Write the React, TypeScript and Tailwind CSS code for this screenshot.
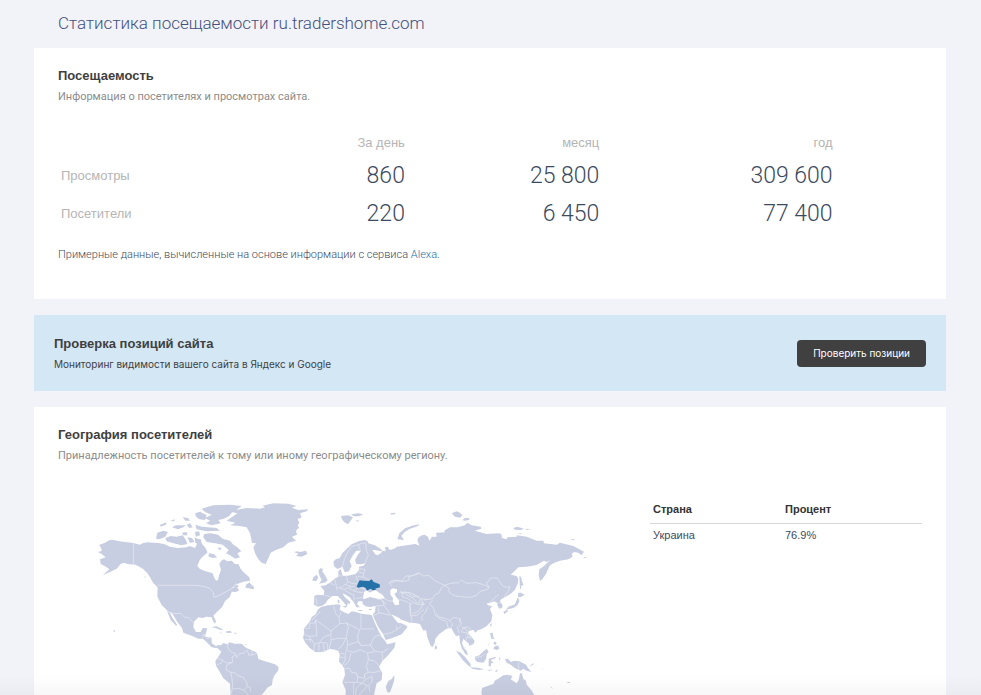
import React from "react";

const LAND = "#c8cee1";
const BORDER = "#e9ecf5";

type Region = { at: string; land: string; seas?: string; borders: string };

// The map is split into regions, each with its own local origin.
const regions: Region[] = [
  {
    // North America
    at: "translate(0 0)",
    land:
      "M24,186 L36,182 30,168 27,165 45,158 58,151 68,149 88,154 130,159 150,164 158,160 172,157 190,158 205,159 222,162 240,170 262,174 290,172 300,168 315,174 322,160 326,146 332,148 336,162 345,172 350,180 352,188 336,202 328,212 322,228 330,237 345,243 368,250 372,262 378,272 384,270 387,256 393,240 388,222 394,212 402,208 412,214 425,212 435,222 445,222 452,236 460,246 478,262 480,272 460,275 442,282 425,295 440,292 448,300 438,306 425,305 420,320 405,333 397,350 380,367 370,377 378,393 375,401 369,393 365,382 350,380 338,384 325,382 312,395 310,412 318,426 332,426 338,414 352,415 348,428 345,440 365,443 365,460 378,468 392,465 390,471 378,474 365,472 352,458 340,447 325,446 305,437 280,428 276,414 262,396 248,372 236,366 215,345 202,320 203,290 190,280 180,262 172,250 160,238 148,230 135,224 112,222 102,218 92,222 80,236 60,246 38,256 58,238 48,230 32,222 30,208 47,202 38,194Z M231,363 L240,370 250,388 262,405 258,407 242,390Z M188,276 L208,290 204,294Z M163,256 l5,8 -3,0Z M480,280 L492,292 490,298 472,292Z M70,421 h5 v4 h-4Z",
    borders:
      "M130,158 V222 L145,229 160,238 172,250 M203,286 H320 L345,290 360,296 370,308 372,322 388,316 410,304 425,296 440,280 M236,366 L255,371 272,370 284,382 296,383 310,398 M335,447 L340,436 346,433",
  },
  {
    // Arctic islands and Greenland
    at: "translate(180 0)",
    land:
      "M230,92 L262,70 244,66 258,60 290,54 330,56 345,52 337,47 370,40 415,41 440,48 425,53 445,60 475,58 470,64 450,70 455,82 443,88 448,98 443,108 448,112 438,122 441,134 426,140 438,152 415,158 400,172 378,180 362,188 355,205 347,222 335,218 325,208 315,190 310,172 318,160 305,158 304,148 300,130 290,112 268,108 240,106 256,98Z M155,56 L190,46 240,44 275,48 262,58 245,68 238,78 222,86 205,90 212,100 185,106 168,100 180,92 165,84 185,74 165,66Z M135,70 L150,65 170,76 165,90 148,88 138,80Z M30,104 L50,97 48,104 32,110Z M60,92 L76,88 72,94Z M98,82 L114,84 120,92 106,92Z M66,112 L78,106 108,106 100,112 84,118Z M110,104 L120,100 128,112 118,114Z M22,128 L40,122 54,126 46,140 28,148 18,146Z M46,144 L62,138 80,140 98,136 108,150 112,162 95,166 70,160 50,154Z M96,128 L110,126 112,136 100,136Z M112,142 L126,144 134,156 120,158Z M134,126 L148,124 150,136 138,140Z M136,104 L155,110 200,114 210,122 170,124 140,118Z M162,132 L182,130 204,134 218,146 240,152 250,164 262,172 274,184 262,190 270,202 256,206 240,196 228,190 236,180 218,164 196,160 170,156 160,142Z M176,190 L190,192 202,202 190,204 176,200Z M206,172 l8,2 -2,6 -8,-2Z M134,142 L152,150 146,164 136,158Z M432,186 L442,184 450,186 468,182 472,192 455,200 438,198 445,191Z M250,290 L262,284 266,290 254,296Z M288,284 L300,276 300,284 312,292 310,297 286,293Z",
    borders: "",
  },
  {
    // South America and the Caribbean
    at: "translate(240 285)",
    land:
      "M124,172 L136,184 148,180 152,182 160,174 172,178 178,172 195,176 215,176 228,188 245,196 258,202 262,208 265,222 290,230 315,238 326,246 324,258 314,270 308,284 306,300 292,308 282,322 272,332 182,332 180,296 160,280 150,262 138,242 136,228 145,215 154,200Z M124,126 L140,124 160,134 152,135 136,129Z M168,139 L182,138 186,143 170,144Z M148,143 h8 v2 h-8Z M193,143 h6 v3 h-6Z M226,176 h3 v4 h-3Z",
    borders:
      "M175,174 L172,186 182,200 196,206 200,218 208,206 222,204 230,196 M232,196 L236,210 248,210 258,206 M246,197 V210 M196,210 L186,216 188,230 M144,220 L158,226 170,234 188,232 M140,240 L154,234 158,226 M188,232 L170,240 168,254 182,262 192,262 204,272 218,276 230,292 232,304 242,308 242,320 M182,262 L186,280 188,304 184,326 M188,312 L206,310 222,316 232,304 M222,316 L236,330 M98,148 L106,152 M108,160 L120,160",
  },
  {
    // Europe, Near East and western Russia
    at: "translate(615 30)",
    land:
      "M118,200 L115,185 122,178 134,174 142,160 154,148 170,133 190,124 208,120 218,124 220,130 240,136 262,150 258,154 240,150 232,150 240,162 246,166 258,160 262,152 272,154 270,142 278,140 284,150 305,144 315,140 345,138 360,132 375,140 368,122 378,108 390,105 400,112 400,388 390,385 375,370 345,368 325,361 305,350 288,343 300,358 308,368 320,370 328,374 338,380 320,403 290,415 272,420 264,402 250,382 236,352 234,342 240,335 242,318 225,321 212,319 203,312 202,304 190,304 186,312 195,322 184,322 176,306 164,292 152,284 142,280 150,292 166,306 164,312 158,310 156,322 150,312 140,300 128,288 112,288 98,300 92,310 82,317 68,320 57,314 58,288 66,284 86,286 88,272 76,258 92,256 108,246 118,236 130,230 130,212 138,208 142,226 154,226 158,216 150,218 142,200 128,207Z M75,205 L84,206 82,214 90,226 98,240 92,247 72,251 80,240 74,228 70,214Z M55,232 L65,224 70,232 64,243 52,242Z M138,48 L160,46 174,52 160,72 152,70 142,60Z M168,43 L190,40 205,43 192,49 176,49Z M180,62 l10,-1 2,4Z M286,40 L302,38 300,42 288,44Z M128,299 h5 v10 h-5Z M132,288 h3 v6 h-3Z M142,318 L154,318 152,324Z M190,330 h12 v3 h-12Z M222,327 h8 v3 h-8Z",
    seas:
      "M198,152 L188,165 180,180 184,192 198,193 212,190 205,197 192,200 192,210 182,222 158,227 143,227 150,217 162,214 165,206 170,198 164,184 172,168 184,152Z M204,296 L207,276 216,270 224,278 240,270 262,284 270,295 250,297 225,291 208,297Z M286,270 L294,265 306,268 306,276 298,282 304,292 312,300 312,314 300,316 293,304 294,294 286,284Z",
    borders:
      "M142,200 L148,178 156,160 170,140 190,134 M190,134 L196,150 M190,134 L200,130 212,128 214,150 220,166 210,188 M130,226 L140,228 M154,228 L158,245 170,250 186,252 M118,236 L122,248 124,260 M104,248 L118,256 M124,262 L140,262 150,254 158,246 M124,264 L128,272 M134,266 L148,268 162,262 180,258 M150,254 L168,258 M162,266 L176,272 190,262 M148,270 L164,280 176,284 M176,272 L186,276 204,278 M190,262 L208,266 212,274 M176,284 L178,300 M184,296 L202,292 M184,228 L188,244 M192,216 L206,220 206,232 222,240 M190,206 L210,208 208,218 M188,228 L204,232 M88,286 L106,290 M64,294 L66,316 M244,296 L262,300 268,316 M268,296 L280,302 292,304 M262,302 L274,312 M242,318 L266,316 278,330 284,342 M282,246 L290,260 M284,246 L296,240 320,244 332,228 350,228 372,218 M312,280 L328,276 340,280 352,288 372,290 M310,300 L322,300 340,308 352,312 M250,322 L252,340 236,346 M252,338 L278,344 288,346 M262,404 L290,398 306,388 320,378 M306,388 L304,378 M346,312 L346,340 352,368 M352,342 L372,332 384,314",
  },
  {
    // Africa
    at: "translate(615 315)",
    land:
      "M68,44 L78,36 100,31 132,28 137,32 134,44 144,50 160,57 170,49 182,51 200,56 230,60 240,85 252,110 262,128 272,140 276,148 302,142 298,158 280,180 262,198 252,215 262,235 260,255 245,265 240,285 237,302 152,302 152,285 142,262 150,240 148,222 143,212 132,200 134,180 130,168 120,164 105,162 85,170 62,172 45,160 30,142 24,128 28,112 26,102 34,92 45,78 50,66 62,58Z M298,240 L298,255 292,274 285,292 277,292 272,275 280,258 290,252Z",
    seas: "",
    borders:
      "M50,76 L76,50 M28,100 H44 V84 H62 V74 M62,74 L108,108 134,86 M116,34 L122,56 132,68 134,86 M138,52 L132,66 M134,86 L154,84 194,104 M198,56 V102 L236,102 M194,104 L188,122 190,140 M154,84 L160,96 154,124 M62,76 L66,122 42,124 28,118 M108,108 V118 L86,126 74,142 M108,120 L108,140 102,162 M110,134 L130,130 152,130 M152,130 L142,152 130,162 M154,124 L158,148 154,166 M158,150 L190,140 196,148 M190,140 L198,152 226,150 238,126 M226,150 L238,168 262,172 280,160 M262,126 L252,120 238,126 M262,172 L262,196 M154,166 L176,172 196,164 218,174 M218,174 L238,170 M218,174 L220,194 238,198 252,212 M152,170 L150,196 142,210 M168,174 L162,198 148,212 M148,220 L164,220 170,232 184,234 188,246 210,250 M220,194 L214,214 220,232 208,238 210,250 M188,246 L186,262 146,262 M186,262 L200,264 218,250 232,244 M220,232 L240,232 260,226 M200,264 L218,272 230,262 232,246 M176,264 V302 M200,264 L184,280 182,300 M218,272 L208,282 192,300 M222,272 L224,290 M44,126 L46,142 M30,134 H50 L58,148 56,168 M72,144 L72,168 M86,146 L88,168 M98,144 L98,164 M58,148 L74,142 96,144 M132,176 H148 M134,186 L150,188",
  },
  {
    // Siberia and northern Asia
    at: "translate(900 30)",
    land:
      "M0,160 L20,140 50,136 75,132 90,138 82,120 86,112 98,105 106,106 104,120 108,136 103,152 110,150 114,140 108,126 112,108 118,122 126,110 140,110 138,98 165,97 162,92 180,82 202,82 225,76 232,68 245,76 272,80 274,86 254,92 290,102 325,100 334,102 336,114 350,118 352,112 380,110 382,106 410,110 440,122 460,122 462,130 500,134 510,128 550,138 568,148 582,155 575,166 565,158 552,156 545,162 548,170 535,178 510,182 490,190 480,196 474,208 468,222 455,240 450,242 446,226 448,208 462,198 480,180 470,186 462,182 440,195 410,200 385,202 375,212 362,224 380,228 385,236 383,250 374,270 364,280 345,290 330,300 290,302 280,260 30,260 0,250Z M22,118 L28,100 45,85 66,77 88,73 84,78 60,86 44,96 34,108 42,120Z M185,40 L200,34 210,38 217,46 210,53 195,50Z M217,60 L226,53 238,55 238,60 224,62Z M370,84 L382,80 402,86 392,90 374,89Z M405,86 L424,88 410,90Z M383,100 L395,99 394,102Z M540,118 L554,117 552,121Z M581,172 h8 v2 h-8Z M388,228 L393,230 396,244 400,256 393,258 393,268 390,266Z M386,278 L392,278 404,284 390,292 384,290Z M384,293 L388,300 382,314 370,322 354,326 346,330 356,320 374,314 380,302Z",
    seas: "",
    borders:
      "M0,250 L18,242 44,244 58,240 56,230 90,220 100,228 116,226 132,240 150,250 164,256 M164,256 L182,250 206,248 214,240 230,250 260,248 280,254 298,262 292,268 270,274 260,286 240,292 214,290 196,288 178,278 176,264 164,256 M164,256 L152,266 148,278 134,284 128,296 104,300 M298,262 L290,250 302,234 322,234 336,256 348,262 360,260 354,276 342,290 M36,290 L38,276 60,278 78,286 92,298 M36,290 L54,296 72,308 84,314 M92,298 L86,306 104,312",
  },
  {
    // South and East Asia, Oceania
    at: "translate(930 270)",
    land:
      "M20,0 L20,-5 352,-5 354,8 345,28 325,46 304,56 300,64 308,76 306,84 298,86 292,76 292,68 282,64 268,70 260,70 264,76 276,78 270,88 277,105 274,124 260,138 244,148 230,152 218,150 208,152 204,160 216,172 224,184 220,192 208,198 206,190 196,182 190,176 186,190 192,204 200,212 204,226 196,222 186,206 180,188 178,166 168,168 160,156 154,144 140,146 118,162 106,176 104,190 97,202 91,196 82,172 78,150 70,152 60,132 30,126 0,118 0,66 8,40Z M0,136 L16,134 20,142 4,158 -8,165Z M106,194 L112,202 108,209 104,206Z M269,134 L275,129 274,140Z M221,150 l9,-4 1,8 -6,4Z M353,52 L358,64 352,76 340,84 322,88 316,92 326,80 344,74 350,62Z M356,38 L372,44 360,52 354,50Z M316,92 L324,90 324,94 318,98 314,103 310,96Z M270,160 L278,158 280,172 284,178 274,176Z M284,184 L290,190 286,196 280,190Z M282,200 L294,196 298,206 290,210 280,206Z M262,196 L270,188 266,194Z M168,212 L180,217 196,232 212,252 212,262 202,254 188,240Z M212,262 L235,263 252,268 238,270 216,266Z M225,230 L238,226 252,212 260,206 266,216 260,222 258,238 250,248 232,246 226,240Z M266,236 L288,230 286,235 272,240 282,250 274,248 272,260 266,258Z M258,269 H280 L270,272Z M284,274 L294,268 290,276Z M298,230 L302,236 298,242Z M314,236 L326,238 332,246 342,242 358,244 378,254 384,264 394,276 380,272 370,266 362,272 344,264 332,254 320,248Z M388,258 L402,248 398,256Z M424,264 L438,274 428,268Z M450,318 L460,326 454,324Z M502,306 h8 v3 h-8Z M248,350 L244,340 246,324 262,318 280,312 284,302 298,294 310,286 322,284 338,288 332,298 350,310 356,300 360,280 366,280 370,296 378,302 380,314 394,330 406,350Z",
    seas: "",
    borders:
      "M0,34 L26,48 42,56 56,74 72,74 64,56 80,58 M98,60 L88,72 100,82 104,98 120,112 140,116 148,122 162,112 180,116 178,128 M84,80 L76,98 66,108 66,122 M28,74 L32,108 50,106 72,88 M104,104 L122,118 140,124 M140,126 L144,142 154,146 M148,122 L158,132 152,142 M180,116 L184,132 172,140 178,160 M184,140 L200,148 206,160 214,176 M190,144 L184,156 200,158 206,174 M200,182 L198,172 214,174 M190,144 L204,140 212,148 M190,200 L198,204 M228,232 L244,230 254,222 M356,246 V270 M268,68 L288,50 296,42 M296,70 L304,66",
  },
];

const ukraine =
  "M185,260 L191,246 194,241 206,242 222,243 230,238 236,246 254,253 255,262 240,266 244,269 234,271 226,266 216,272 212,264 204,260 190,263Z";

function WorldMap() {
  return (
    <svg viewBox="-96 15 1776 600" className="block w-full" role="img" aria-label="Карта мира">
      {regions.map((r) => (
        <path key={r.at} transform={r.at} d={r.land} fill={LAND} />
      ))}
      {regions.map((r) => (
        <path key={r.at} transform={r.at} d={r.seas} fill="#fff" />
      ))}
      {regions.map((r) => (
        <path key={r.at} transform={r.at} d={r.borders} fill="none" stroke={BORDER} strokeWidth={2} strokeLinejoin="round" />
      ))}
      <path transform="translate(615 30)" d={ukraine} fill="#2572a8" />
    </svg>
  );
}

const traffic = [
  { label: "Просмотры", values: ["860", "25 800", "309 600"] },
  { label: "Посетители", values: ["220", "6 450", "77 400"] },
];

const countries = [{ name: "Украина", share: "76.9%" }];

function CardHeading({ title, text }: { title: string; text: string }) {
  return (
    <header>
      <h2 className="text-[13px] leading-5 font-bold text-[#3f3f3f]">{title}</h2>
      <p className="font-['Roboto',sans-serif] text-[11px] leading-[22px] text-[#8c8c8c]">{text}</p>
    </header>
  );
}

function TrafficCard() {
  return (
    <section className="bg-white px-6 pt-[18px] pb-[33px]">
      <CardHeading title="Посещаемость" text="Информация о посетителях и просмотрах сайта." />
      <table className="mt-[21px] w-[90%] table-fixed">
        <colgroup>
          <col className="w-[18%]" />
          <col className="w-[27%]" />
          <col className="w-[25%]" />
          <col className="w-[30%]" />
        </colgroup>
        <thead>
          <tr className="h-7 text-right text-[13px] text-[#b5b5b5]">
            <td />
            <th scope="col" className="px-[3px] font-normal">За день</th>
            <th scope="col" className="px-[3px] font-normal">месяц</th>
            <th scope="col" className="px-[3px] font-normal">год</th>
          </tr>
        </thead>
        <tbody>
          {traffic.map((row) => (
            <tr key={row.label} className="h-[38px]">
              <th scope="row" className="px-[3px] text-left text-[13px] font-normal text-[#b5b5b5]">
                {row.label}
              </th>
              {row.values.map((value) => (
                <td key={value} className="px-[3px] text-right font-['Roboto',sans-serif] text-[23px] leading-8 font-light">
                  {value}
                </td>
              ))}
            </tr>
          ))}
        </tbody>
      </table>
      <p className="mt-[11px] font-['Roboto',sans-serif] text-[11px] leading-[22px] font-light">
        Примерные данные, вычисленные на основе информации с сервиса{" "}
        <a href="#alexa" className="text-[#2572a8]">Alexa</a>.
      </p>
    </section>
  );
}

function PositionsBanner() {
  return (
    <section className="flex items-center justify-between bg-[#d4e7f5] px-5 py-[18px]">
      <div className="text-[#3f3f3f]">
        <h2 className="text-[13px] leading-[22px] font-bold">Проверка позиций сайта</h2>
        <p className="font-['Inter',sans-serif] text-[10px] leading-[18px]">
          Мониторинг видимости вашего сайта в Яндекс и Google
        </p>
      </div>
      <button
        type="button"
        className="rounded bg-[#404041] px-4 font-['Inter',sans-serif] text-[10px] leading-[27px] text-white"
      >
        Проверить позиции
      </button>
    </section>
  );
}

function GeographyCard() {
  return (
    <section className="flex-1 bg-white px-6 pt-[18px]">
      <CardHeading
        title="География посетителей"
        text="Принадлежность посетителей к тому или иному географическому региону."
      />
      <div className="mt-7 flex items-start">
        <div className="flex-1">
          <WorldMap />
        </div>
        <table className="w-[272px] table-fixed text-[11px]">
          <colgroup>
            <col className="w-[132px]" />
            <col />
          </colgroup>
          <thead>
            <tr className="h-7 border-b border-[#d5d7da] text-left text-[#333]">
              <th scope="col" className="px-[3px]">Страна</th>
              <th scope="col" className="px-[3px]">Процент</th>
            </tr>
          </thead>
          <tbody>
            {countries.map((c) => (
              <tr key={c.name} className="h-6">
                <td className="px-[3px]">{c.name}</td>
                <td className="px-[3px]">{c.share}</td>
              </tr>
            ))}
          </tbody>
        </table>
      </div>
    </section>
  );
}

export default function App() {
  return (
    <div className="relative flex min-h-screen flex-col bg-[#f2f3f8] px-[34px] font-['Liberation_Sans',Arial,sans-serif] text-[#3c4a5e]">
      <h1 className="px-6 pt-[11px] pb-[13px] font-['Roboto',sans-serif] text-[17px] leading-6 font-light text-[#43507e]">
        Статистика посещаемости ru.tradershome.com
      </h1>
      <main className="mr-px flex flex-1 flex-col gap-4">
        <TrafficCard />
        <PositionsBanner />
        <GeographyCard />
      </main>
      <div className="pointer-events-none absolute inset-x-0 bottom-0 h-5 bg-linear-to-b from-transparent to-black/3" />
    </div>
  );
}
